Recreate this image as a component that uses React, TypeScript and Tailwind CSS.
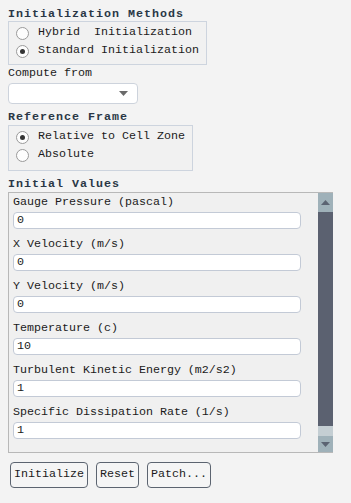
import React from "react";

const fields = [
  { label: "Gauge Pressure (pascal)", value: "0" },
  { label: "X Velocity (m/s)", value: "0" },
  { label: "Y Velocity (m/s)", value: "0" },
  { label: "Temperature (c)", value: "10" },
  { label: "Turbulent Kinetic Energy (m2/s2)", value: "1" },
  { label: "Specific Dissipation Rate (1/s)", value: "1" },
];

function Title({ children }: { children: React.ReactNode }) {
  return (
    <div className="h-[14px] leading-[14px] font-bold tracking-[1px] text-[#2a3746]">{children}</div>
  );
}

function Radio({ checked, label }: { checked?: boolean; label: string }) {
  return (
    <div className="h-[18px] flex items-center pl-[7px]">
      <span className="w-[13px] h-[13px] rounded-full border border-[#9a9a9a] bg-[#fdfdfd] flex items-center justify-center shrink-0">
        {checked ? <span className="w-[5px] h-[5px] rounded-full bg-[#333]" /> : null}
      </span>
      <span className="ml-[9px] whitespace-pre">{label}</span>
    </div>
  );
}

function Arrow({ up }: { up?: boolean }) {
  return (
    <svg width="9" height="5" viewBox="0 0 9 5">
      <path d={up ? "M4.5 0 L9 5 L0 5 Z" : "M0 0 L9 0 L4.5 5 Z"} fill="#5b6372" />
    </svg>
  );
}

export default function App() {
  return (
    <div className="w-[351px] h-[503px] bg-[#f3f3f3] text-[#1b1b1b] text-[11.67px] font-['Liberation_Mono',monospace] px-2 pt-[7px]">
      {/* Initialization Methods */}
      <Title>Initialization Methods</Title>
      <div className="w-[199px] h-[44px] border border-[#cdd4de] bg-[#f1f1f1] pt-[2px]">
        <Radio label="Hybrid  Initialization" />
        <Radio checked label="Standard Initialization" />
      </div>

      {/* Compute from */}
      <div className="h-[15px] leading-[15px] mt-[1px]">Compute from</div>
      <div className="mt-[2px] w-[130px] h-[21px] bg-white border border-[#cdd3dc] rounded-[4px] flex items-center justify-end pr-[9px]">
        <svg width="9" height="5" viewBox="0 0 9 5">
          <path d="M0 0 L9 0 L4.5 5 Z" fill="#6a6a6a" />
        </svg>
      </div>

      {/* Reference Frame */}
      <div className="mt-[6px]">
        <Title>Reference Frame</Title>
      </div>
      <div className="mt-[1px] w-[185px] h-[46px] border border-[#cdd4de] bg-[#f1f1f1] pt-[2px]">
        <Radio checked label="Relative to Cell Zone" />
        <Radio label="Absolute" />
      </div>

      {/* Initial Values */}
      <div className="mt-[6px]">
        <Title>Initial Values</Title>
      </div>
      <div className="mt-[1px] w-[325px] h-[261px] border border-[#b8b8b8] border-r-0 bg-[#f0f0f0] flex">
        <div className="flex-1 pl-[4px] pt-[2px]">
          {fields.map((f) => (
            <div key={f.label} className="h-[41px]">
              <div className="h-[13px] leading-[13px] mt-[1px]">{f.label}</div>
              <div className="mt-[3px] w-[288px] h-[17px] bg-white border border-[#c3cad6] rounded-[4px] leading-[15px] pl-[3px]">
                {f.value}
              </div>
            </div>
          ))}
        </div>
        <div className="w-[15px] flex flex-col">
          <div className="h-[19px] bg-[#9fb1b9] flex items-center justify-center">
            <Arrow up />
          </div>
          <div className="flex-1 bg-[#5b6170]" />
          <div className="h-[10px] bg-[#c4ced3]" />
          <div className="h-[16px] bg-[#9fb1b9] flex items-center justify-center">
            <Arrow />
          </div>
        </div>
      </div>

      {/* Buttons */}
      <div className="mt-[9px] ml-[2px] flex gap-[8px]">
        {["Initialize", "Reset", "Patch..."].map((b) => (
          <div
            key={b}
            className="h-[26px] px-[3px] border border-[#5c6470] rounded-[4px] bg-[#f5f5f5] flex items-center"
          >
            {b}
          </div>
        ))}
      </div>
    </div>
  );
}
